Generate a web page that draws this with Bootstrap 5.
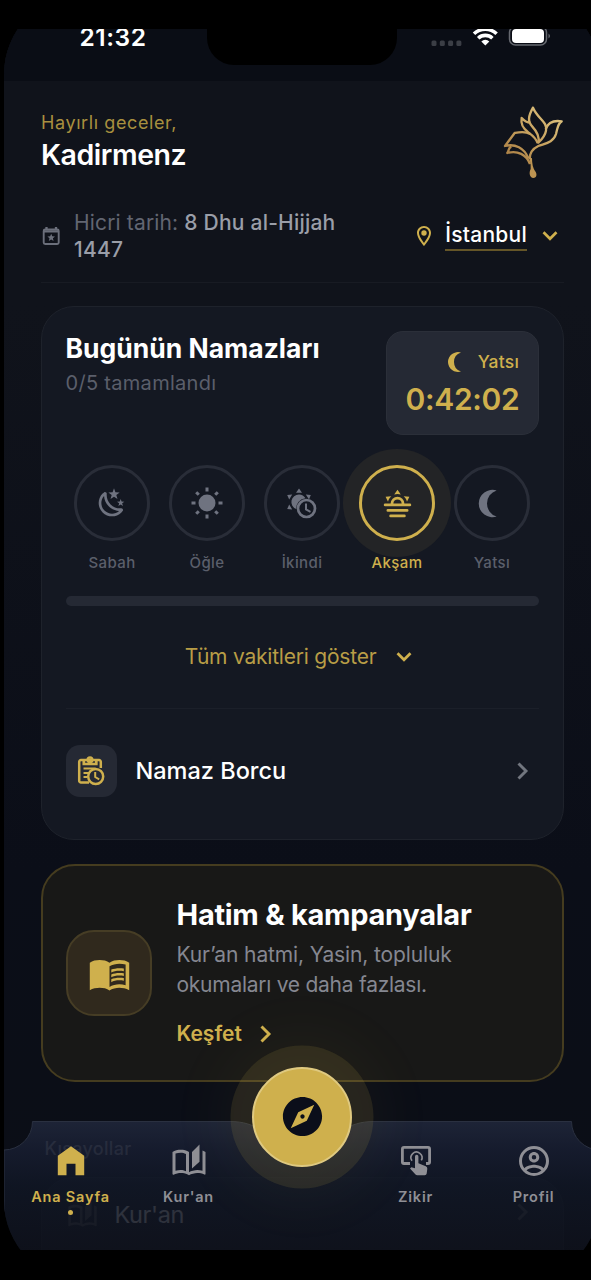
<!DOCTYPE html>
<html lang="tr" data-bs-theme="dark">
<head>
<meta charset="utf-8">
<meta name="viewport" content="width=device-width, initial-scale=1">
<title>Ana Sayfa</title>
<link href="https://cdn.jsdelivr.net/npm/bootstrap@5.3.0/dist/css/bootstrap.min.css" rel="stylesheet">
<script src="https://cdn.jsdelivr.net/npm/bootstrap@5.3.0/dist/js/bootstrap.bundle.min.js" defer></script>
<style>
:root{--gold:#cfb04d}
body{background:#000;font-family:Inter,"Liberation Sans",sans-serif;color:#fff;height:1280px;overflow:hidden}
svg{display:block;flex:none}
.window{margin-top:29px;height:1221px}
.phone{margin:-35.5px 0 0 4px;width:596px;height:1287px;border-radius:80px;padding-top:35.5px;background:linear-gradient(#10131b 0,#10131b 24%,#0b0e18 68%,#0b0e16 100%)}
.statusbar{height:52px;background:#0a0d15}
.clock{font-size:24.5px;line-height:24px;font-weight:600;margin:-4.5px 0 0 75.5px;letter-spacing:.55px}
.notch{width:190px;height:36px;border-radius:0 0 27px 27px;background:#000}
.status-icons{margin-right:48px}
.content{padding:24px 36.5px 0}
.gold{color:var(--gold)}
.hello{font-size:18px;line-height:24px;letter-spacing:.6px;color:#a8903f;padding-left:.5px}
.username{font-size:28.5px;line-height:38px;font-weight:600;letter-spacing:-.45px;margin-top:1px;padding-left:.5px}
.daterow{margin-top:30px;height:74px;padding-bottom:19px;border-bottom:1px solid #181b23}
.hijri{font-size:21px;line-height:27px;color:#626672;margin-left:13.5px;width:290px;letter-spacing:.15px}
.hijri b{font-weight:500;color:#9a9ea8;letter-spacing:.22px}
.city{font-size:21px;line-height:26px;font-weight:500;border-bottom:2px solid #655628;padding-bottom:1px;margin:1px 15px 0 9px;letter-spacing:.25px}
.prayers{margin-top:23px;height:534px;padding:24px;border:1px solid #1e222b;border-radius:33px;background:#141822}
.prayers h2{font-size:26.5px;line-height:34px;font-weight:700;margin:0;letter-spacing:0}
.done{font-size:20px;line-height:26px;margin-top:5px;color:#5b5f6b;letter-spacing:.3px}
.timer{width:152.5px;height:104px;border-radius:17px;background:#252934;border:1px solid #2b2f39;padding:17px 18.5px 0}
.timer .next{font-size:17.5px;line-height:26px;font-weight:500;letter-spacing:.2px}
.timer .left-time{font-size:30px;line-height:36px;font-weight:600;margin-top:6px;white-space:nowrap;letter-spacing:-.3px}
.slots{margin:30px -1px 0}
.slot{width:95px;color:#5b5f6b;font-size:15px;line-height:20px;font-weight:500;letter-spacing:.4px}
.ring{width:76px;height:76px;border:3px solid #292d38;color:#6f7380;margin-bottom:12px}
.slot.on{color:var(--gold)}
.slot.on .ring{border-color:var(--gold);color:var(--gold);background:#232426;box-shadow:0 0 0 16px #232426}
.slot span{position:relative}
.bar{height:9.5px;background:#252934;margin-top:23px}
.showall{margin-top:36px;font-size:21px;line-height:30px;color:#b89d46;gap:20px;letter-spacing:-.22px;padding-right:7px}
.debt{margin-top:36.5px;border-top:1px solid #1b1f29;padding-top:36px}
.tile{width:51.5px;height:51.5px;border-radius:14px;background:#252934}
.debt-label{font-size:23.5px;font-weight:500;margin-left:18.5px;line-height:30px}
.hatim{margin-top:24px;height:218px;border:2px solid #453c1f;border-radius:34px;background:#181817;padding:0 23.500px}
.booktile{width:86px;height:86px;border-radius:28px;background:#30291d;border:2px solid #463d25}
.hatim-text{margin-left:24.5px;padding-top:30px}
.hatim h2{font-size:29px;line-height:38px;font-weight:700;letter-spacing:-.28px;margin:0}
.hatim p{font-size:21px;line-height:30.5px;color:#858791;margin:5.5px 0 0;letter-spacing:-.12px}
.hatim p span{letter-spacing:-.26px}
.more{font-size:21px;line-height:28px;font-weight:600;margin-top:19.5px;gap:18px}
.shortcuts h3{font-size:18px;line-height:24px;font-weight:500;margin:55px 0 0 4px;letter-spacing:.3px;color:#888}
.shortcut{margin-top:16px;border:1px solid #1e222b;border-radius:32px;background:#141822;height:160px;padding:21px 34px 0 25px}
.shortcut div{font-size:23.5px;line-height:28px;letter-spacing:-.4px;color:#fff}
.tabs{height:160px}
.tab{position:relative;font-size:14.5px;line-height:20px;font-weight:600;letter-spacing:.8px;color:#8f8f95;padding-top:22px}
.tab.active{color:var(--gold)}
.tab svg{margin-bottom:8px}
.dot{width:5px;height:5px;margin-top:3px;background:var(--gold)}
.fab{width:100px;height:100px;left:248px;top:-54px;background:var(--gold);border:2px solid #dfc980;box-shadow:0 0 0 21.5px rgba(207,176,77,.12),0 0 60px 36px rgba(207,176,77,.045)}
</style>
</head>
<body>
<svg width="0" height="0" class="position-absolute">
<defs>
<symbol id="moon" viewBox="0 0 24 24"><path d="M2 12A10 10 0 0 0 15 21.540A10 10 0 0 1 15 2.460A10 10 0 0 0 2 12Z"/></symbol>
<symbol id="down" viewBox="0 0 16 10"><path d="M1.500 1.300 8 7.800l6.500-6.500" fill="none" stroke="currentColor" stroke-width="2.700"/></symbol>
<symbol id="right" viewBox="0 0 12 18"><path d="M1.500 1.500 9 9l-7.500 7.500" fill="none" stroke="currentColor" stroke-width="2.900"/></symbol>
<symbol id="stories" viewBox="0 0 24 24"><path fill-rule="evenodd" d="M19 1l-5 5v11l5-4.500V1zM1 6v14.650c0 .25.25.5.5.5.1 0 .15-.05.25-.05C3.100 20.450 5.050 20 6.500 20c1.950 0 4.050.4 5.500 1.500 1.350-.85 3.800-1.500 5.500-1.500 1.650 0 3.350.3 4.750 1.050.1.05.15.05.25.05.25 0 .5-.25.5-.5V6c-.6-.45-1.250-.75-2-1v13.500c-1.100-.35-2.300-.5-3.500-.5-1.700 0-4.150.65-5.500 1.500V6c-1.450-1.100-3.550-1.500-5.500-1.500S2.450 4.900 1 6zm2 12.500V7c1.100-.4 2.300-.5 3.500-.5 1.340 0 2.130.2 3.500.8v11.500C8.630 18.210 7.840 18 6.500 18c-1.200 0-2.400.15-3.500.5z"/></symbol>
</defs>
</svg>
<div class="window overflow-hidden">
<div class="phone position-relative overflow-hidden">
  <div class="statusbar d-flex justify-content-between position-relative">
    <div class="clock">21:32</div>
    <div class="notch position-absolute top-0 start-50 translate-middle-x"></div>
    <svg class="status-icons" width="121" height="20" viewBox="0 0 121 20">
      <g fill="#3b3e45"><rect x=".5" y="11.500" width="5" height="5.500" rx="1.500"/><rect x="8.800" y="11.500" width="5" height="5.500" rx="1.500"/><rect x="17.100" y="11.500" width="5" height="5.500" rx="1.500"/><rect x="25.400" y="11.500" width="5" height="5.500" rx="1.500"/></g>
      <g fill="none" stroke="#fff" stroke-width="3.600"><path d="M43 4.800a16.500 16.500 0 0 1 22.600 0"/><path d="M47.200 9.200a10.400 10.400 0 0 1 14.200 0"/></g>
      <path d="M50.300 12.400a6 6 0 0 1 8 0l-4 4.100z" fill="#fff"/>
      <rect x="78.500" y="-2.500" width="37" height="18.500" rx="6" fill="none" stroke="#666970" stroke-width="1.500"/>
      <rect x="81" y="0" width="32" height="14" rx="4" fill="#fff"/><path d="M117.500 4.500q3 2.500 0 5z" fill="#666970"/>
    </svg>
  </div>

  <main class="content">
    <header class="d-flex justify-content-between align-items-center">
      <div><div class="hello">Hayırlı geceler,</div><div class="username">Kadirmenz</div></div>
      <svg width="60" height="74" viewBox="69 45 180 222" style="margin-right:1px">
        <defs><linearGradient id="lg" gradientUnits="userSpaceOnUse" x1="80" y1="240" x2="220" y2="70"><stop offset="0" stop-color="#a0743d"/><stop offset=".5" stop-color="#c39c5a"/><stop offset="1" stop-color="#dcc07c"/></linearGradient></defs>
        <g fill="none" stroke="url(#lg)" stroke-width="7" stroke-linejoin="round">
          <path d="M159 53C145 78 142 94 157 110C170 124 180 138 175 158C188 146 195 138 198 122C203 94 174 88 159 53Z"/>
          <path d="M151 98C140 98 132 92 125 84C121 105 130 116 145 127C160 138 170 148 173 160"/>
          <path d="M197 117C206 93 226 91 245 94C233 100 233 114 228 132C220 158 195 160 175 168C158 176 149 188 149 207"/>
          <path d="M151 132C134 122 118 126 104 129L75 168C104 160 134 174 145 206"/>
          <path d="M94 170C84 174 88 180 82 189C112 180 140 194 150 222"/>
        </g>
        <path d="M143 198Q153 210 152 237C146 248 149 264 160 264C171 264 172 251 165 243Q156 230 156 205Z" fill="#bd9452"/>
      </svg>
    </header>

    <div class="daterow d-flex align-items-center">
      <svg width="20" height="20" viewBox="0 0 20 20" fill="none" stroke="#6b6f7b"><rect x="2.700" y="3.500" width="15" height="14.500" rx="1.500" stroke-width="1.900"/><path d="M2.500 5.300h15.500M5.500 1v3M15 1v3" stroke-width="2.300"/><path d="m10.200 7.800 1.100 2.500 2.700.2-2.100 1.800.7 2.700-2.400-1.500-2.400 1.500.7-2.700-2.100-1.800 2.700-.2z" fill="#6b6f7b" stroke="none"/></svg>
      <div class="hijri">Hicri tarih: <b>8 Dhu al-Hijjah 1447</b></div>
      <div class="d-flex align-items-center ms-auto">
        <svg width="24" height="24" viewBox="0 0 24 24" fill="#cfb04d"><path fill-rule="evenodd" d="M12 2C8.130 2 5 5.130 5 9c0 5.250 7 13 7 13s7-7.750 7-13c0-3.870-3.130-7-7-7zM7 9c0-2.760 2.240-5 5-5s5 2.240 5 5c0 2.880-2.880 7.190-5 9.880C9.920 16.210 7 11.850 7 9z"/><circle cx="12" cy="9" r="2.700"/></svg>
        <div class="city">İstanbul</div>
        <svg class="gold" style="margin-right:5.500px" width="16" height="10"><use href="#down"/></svg>
      </div>
    </div>

    <section class="prayers">
      <div class="d-flex justify-content-between">
        <div><h2>Bugünün Namazları</h2><div class="done">0/5 tamamlandı</div></div>
        <div class="timer gold text-end">
          <div class="next d-flex justify-content-end align-items-center"><svg class="me-2" width="24" height="24" fill="currentColor"><use href="#moon"/></svg>Yatsı</div>
          <div class="left-time">0:42:02</div>
        </div>
      </div>
      <div class="slots d-flex text-center">
        <div class="slot"><div class="ring rounded-circle d-flex align-items-center justify-content-center mx-auto"><svg width="32" height="32" viewBox="0 0 24 24" fill="currentColor"><path d="M17.750 4.090L15.220 6.030L16.130 9.090L13.500 7.280L10.870 9.090L11.780 6.030L9.250 4.090L12.440 4L13.500 1L14.560 4L17.750 4.090M21.250 11L19.610 12.250L20.200 14.230L18.500 13.060L16.800 14.230L17.390 12.250L15.750 11L17.810 10.950L18.500 9L19.190 10.950L21.250 11M18.970 15.950C19.800 15.870 20.690 17.050 20.160 17.800C19.840 18.250 19.500 18.670 19.080 19.070C15.170 23 8.840 23 4.940 19.070C1.030 15.170 1.030 8.830 4.940 4.930C5.340 4.530 5.760 4.170 6.210 3.850C6.960 3.320 8.140 4.210 8.060 5.040C7.790 7.900 8.750 10.870 10.950 13.060C13.140 15.260 16.100 16.220 18.970 15.950M17.330 17.970C14.500 17.810 11.700 16.640 9.530 14.500C7.360 12.310 6.200 9.500 6.040 6.680C3.230 9.820 3.340 14.640 6.350 17.660C9.370 20.670 14.190 20.780 17.330 17.970Z"/></svg></div><span>Sabah</span></div>
        <div class="slot"><div class="ring rounded-circle d-flex align-items-center justify-content-center mx-auto"><svg width="32" height="32" viewBox="-16 -16 32 32" fill="currentColor" stroke="currentColor" stroke-width="3"><circle r="8.500" stroke="none"/><path d="M0-15.500v4M0 15.500v-4M-15.500 0h4M15.500 0h-4M-10.800-10.800l2.600 2.600M10.800-10.800l-2.600 2.600M-10.800 10.800l2.600-2.600M10.800 10.800l-2.600-2.600"/></svg></div><span>Öğle</span></div>
        <div class="slot"><div class="ring rounded-circle d-flex align-items-center justify-content-center mx-auto"><svg width="32" height="32" viewBox="0 0 32 32" fill="currentColor"><path d="M13 1.500l3 4.300h-6zM1.200 8l5-.5-3 5zM24.800 8l-5-.5 3.200 5zM1.200 22l5 .5-3-5z"/><path d="M13 7.500a7.500 7.500 0 0 1 6.500 3.800 10 10 0 0 0-9.300 10.700A7.500 7.500 0 0 1 13 7.500z"/><circle cx="20.500" cy="21.500" r="8.500" fill="none" stroke="currentColor" stroke-width="2.700"/><path d="M20 16.500v6l4.500 2.300" fill="none" stroke="currentColor" stroke-width="2"/></svg></div><span>İkindi</span></div>
        <div class="slot on"><div class="ring rounded-circle d-flex align-items-center justify-content-center mx-auto"><svg width="33" height="33" viewBox="0 0 24 24" fill="currentColor"><path d="M3 12H7A5 5 0 0 1 12 7A5 5 0 0 1 17 12H21A1 1 0 0 1 22 13A1 1 0 0 1 21 14H3A1 1 0 0 1 2 13A1 1 0 0 1 3 12M15 12A3 3 0 0 0 12 9A3 3 0 0 0 9 12H15M12 2L14.390 5.420C13.650 5.150 12.840 5 12 5C11.160 5 10.350 5.150 9.610 5.420L12 2M3.340 7L7.500 6.650C6.900 7.160 6.360 7.780 5.940 8.500C5.500 9.240 5.250 10 5.110 10.790L3.340 7M20.650 7L18.880 10.790C18.740 10 18.470 9.230 18.050 8.500C17.630 7.780 17.100 7.150 16.500 6.640L20.650 7M5 16H19A1 1 0 0 1 20 17A1 1 0 0 1 19 18H5A1 1 0 0 1 4 17A1 1 0 0 1 5 16M17 20A1 1 0 0 1 18 21A1 1 0 0 1 17 22H7A1 1 0 0 1 6 21A1 1 0 0 1 7 20H17Z"/></svg></div><span>Akşam</span></div>
        <div class="slot"><div class="ring rounded-circle d-flex align-items-center justify-content-center mx-auto"><svg width="33" height="33" fill="currentColor"><use href="#moon"/></svg></div><span>Yatsı</span></div>
      </div>
      <div class="bar rounded-pill"></div>
      <div class="showall d-flex justify-content-center align-items-center">Tüm vakitleri göster<svg class="gold" width="16" height="10"><use href="#down"/></svg></div>
      <div class="debt d-flex align-items-center">
        <div class="tile d-flex align-items-center justify-content-center"><svg width="28" height="30" viewBox="0 0 28 30" fill="none" stroke="#cfb04d" stroke-width="2.500"><path d="M12 26.500H4a1.800 1.800 0 0 1-1.800-1.800V5.800A1.800 1.800 0 0 1 4 4h18a1.800 1.800 0 0 1 1.800 1.800V12"/><path d="M6.800 4.500V8h12.500V4.500" stroke-width="2.700"/><circle cx="13" cy="3.800" r="2.300"/><path d="M6.500 12.500h12M6.500 17h6M6.500 21h4" stroke-width="2"/><circle cx="18.700" cy="20.500" r="7.500" fill="#252934"/><path d="M18.200 16v5l4 2.300" stroke-width="2"/></svg></div>
        <div class="debt-label">Namaz Borcu</div>
        <svg class="ms-auto" style="margin-right:9.500px" width="12" height="18" color="#72767f"><use href="#right"/></svg>
      </div>
    </section>

    <section class="hatim d-flex">
      <div class="booktile d-flex align-items-center justify-content-center align-self-center"><svg width="43" height="43" viewBox="0 0 24 24" fill="#cfb04d"><path fill-rule="evenodd" d="M12 6C10.500 4.900 8.500 4.500 6.500 4.500S2.500 4.900 1 6v15.300C2.500 20.400 4.800 20 6.500 20c1.950 0 4.050.4 5.500 1.500 1.350-.85 3.800-1.500 5.500-1.500 1.650 0 3.800.4 5.500 1.300V6C21.500 4.900 19.450 4.500 17.500 4.500S13.500 4.900 12 6zM21 18.500c-1.100-.35-2.300-.5-3.500-.5-1.700 0-4.150.65-5.500 1.500V8c1.350-.85 3.800-1.500 5.500-1.500 1.200 0 2.400.15 3.500.5z"/><path d="M17.500 10.500c.88 0 1.730.09 2.500.26V9.240C19.210 9.090 18.360 9 17.500 9c-1.700 0-3.240.29-4.500.83v1.660c1.130-.64 2.700-.99 4.500-.99zM13 12.490v1.660c1.130-.64 2.700-.99 4.500-.99.88 0 1.730.09 2.500.26V11.900c-.79-.15-1.640-.24-2.500-.24-1.700 0-3.240.3-4.500.83zM17.500 14.330c-1.700 0-3.240.29-4.500.83v1.660c1.130-.64 2.700-.99 4.500-.99.88 0 1.730.09 2.500.26v-1.520c-.79-.16-1.640-.24-2.500-.24z"/></svg></div>
      <div class="hatim-text">
        <h2>Hatim &amp; kampanyalar</h2>
        <p>Kur’an hatmi, Yasin, topluluk<br><span>okumaları ve daha fazlası.</span></p>
        <div class="more gold d-flex align-items-center">Keşfet<svg width="12" height="18"><use href="#right"/></svg></div>
      </div>
    </section>

    <section class="shortcuts">
      <h3>Kısayollar</h3>
      <div class="shortcut d-flex align-items-start justify-content-between">
        <div class="d-flex align-items-center"><svg width="31" height="31" fill="#555" style="margin-right:17px"><use href="#stories"/></svg>Kur'an</div>
        <svg class="mt-1" width="12" height="18" color="#555"><use href="#right"/></svg>
      </div>
    </section>
  </main>

  <nav class="tabs position-absolute start-0 bottom-0 w-100">
    <svg class="position-absolute top-0 start-0" width="596" height="160" viewBox="0 0 596 160">
      <defs><linearGradient id="ng" x1="0" y1="0" x2="0" y2="1"><stop offset="0" stop-color="#20273b"/><stop offset=".18" stop-color="#171d30"/><stop offset=".4" stop-color="#101624"/><stop offset=".8" stop-color="#0e111b"/></linearGradient></defs>
      <path d="M0 29A28.500 28.500 0 0 0 28.500.5H226C240 .5 248 4 258 9Q298 45 338 9C348 4 356 .5 370 .5H567.500A28.500 28.500 0 0 0 596 29V160H0Z" fill="url(#ng)" fill-opacity=".87" stroke="#2a3040" stroke-width="1"/>
    </svg>
    <div class="d-flex position-relative">
      <div class="tab active d-flex flex-column align-items-center" style="width:133px"><svg width="36" height="36" viewBox="0 0 24 24" fill="#cfb04d"><path d="M3.200 21.500V8.500L12 2.200l8.800 6.300v13h-5.800v-7.700H9v7.700z"/></svg>Ana Sayfa<i class="dot rounded-circle"></i></div>
      <div class="tab d-flex flex-column align-items-center" style="width:103px"><svg width="36" height="36" fill="#8f8f95"><use href="#stories"/></svg>Kur'an</div>
      <div style="width:124px"></div>
      <div class="tab d-flex flex-column align-items-center" style="width:103px"><svg width="36" height="36" viewBox="0 0 36 36" fill="none" stroke="#8f8f95" stroke-width="2.800"><path d="M12 20.500H6a1.600 1.600 0 0 1-1.600-1.600V6A1.600 1.600 0 0 1 6 4.400h24A1.600 1.600 0 0 1 31.600 6v12.900a1.600 1.600 0 0 1-1.600 1.600h-2"/><path d="M14 17.800a5.500 5.500 0 1 1 9.300-.5" stroke-width="1.600"/><path d="M17 13.500a1.700 1.700 0 0 1 3.400 0v6.800l7.400 2.900q1.700.7 1.500 2.500l-.6 4.800q-.3 1.700-2 1.700h-7.500q-1 0-1.700-.8l-5.500-6 1.300-1.200 3.700 1z" fill="#8f8f95" stroke="none"/></svg>Zikir</div>
      <div class="tab d-flex flex-column align-items-center" style="width:133px"><svg width="36" height="36" viewBox="0 0 24 24" fill="#8f8f95"><path d="M12 2A10 10 0 0 0 2 12A10 10 0 0 0 12 22A10 10 0 0 0 22 12A10 10 0 0 0 12 2M7.070 18.280C7.500 17.380 10.120 16.500 12 16.500C13.880 16.500 16.500 17.380 16.930 18.280C15.570 19.360 13.860 20 12 20C10.140 20 8.430 19.360 7.070 18.280M18.360 16.830C16.930 15.090 13.460 14.500 12 14.500C10.540 14.500 7.070 15.090 5.640 16.830C4.620 15.500 4 13.820 4 12C4 7.590 7.590 4 12 4C16.410 4 20 7.590 20 12C20 13.820 19.380 15.500 18.360 16.830M12 6C10.060 6 8.500 7.560 8.500 9.500C8.500 11.440 10.060 13 12 13C13.940 13 15.500 11.440 15.500 9.500C15.500 7.560 13.940 6 12 6M12 11A1.500 1.500 0 0 1 10.500 9.500A1.500 1.500 0 0 1 12 8A1.500 1.500 0 0 1 13.500 9.500A1.500 1.500 0 0 1 12 11Z"/></svg>Profil</div>
    </div>
    <div class="fab position-absolute rounded-circle d-flex align-items-center justify-content-center"><svg width="47" height="47" viewBox="0 0 24 24" fill="#0b0e1a"><path d="M12 10.900c-.61 0-1.100.49-1.100 1.100s.49 1.100 1.100 1.100c.61 0 1.100-.49 1.100-1.100s-.49-1.100-1.100-1.100zM12 2C6.480 2 2 6.480 2 12s4.480 10 10 10 10-4.480 10-10S17.520 2 12 2zm2.190 12.190L6 18l3.810-8.190L18 6l-3.810 8.190z"/></svg></div>
  </nav>
</div>
</div>
</body>
</html>
